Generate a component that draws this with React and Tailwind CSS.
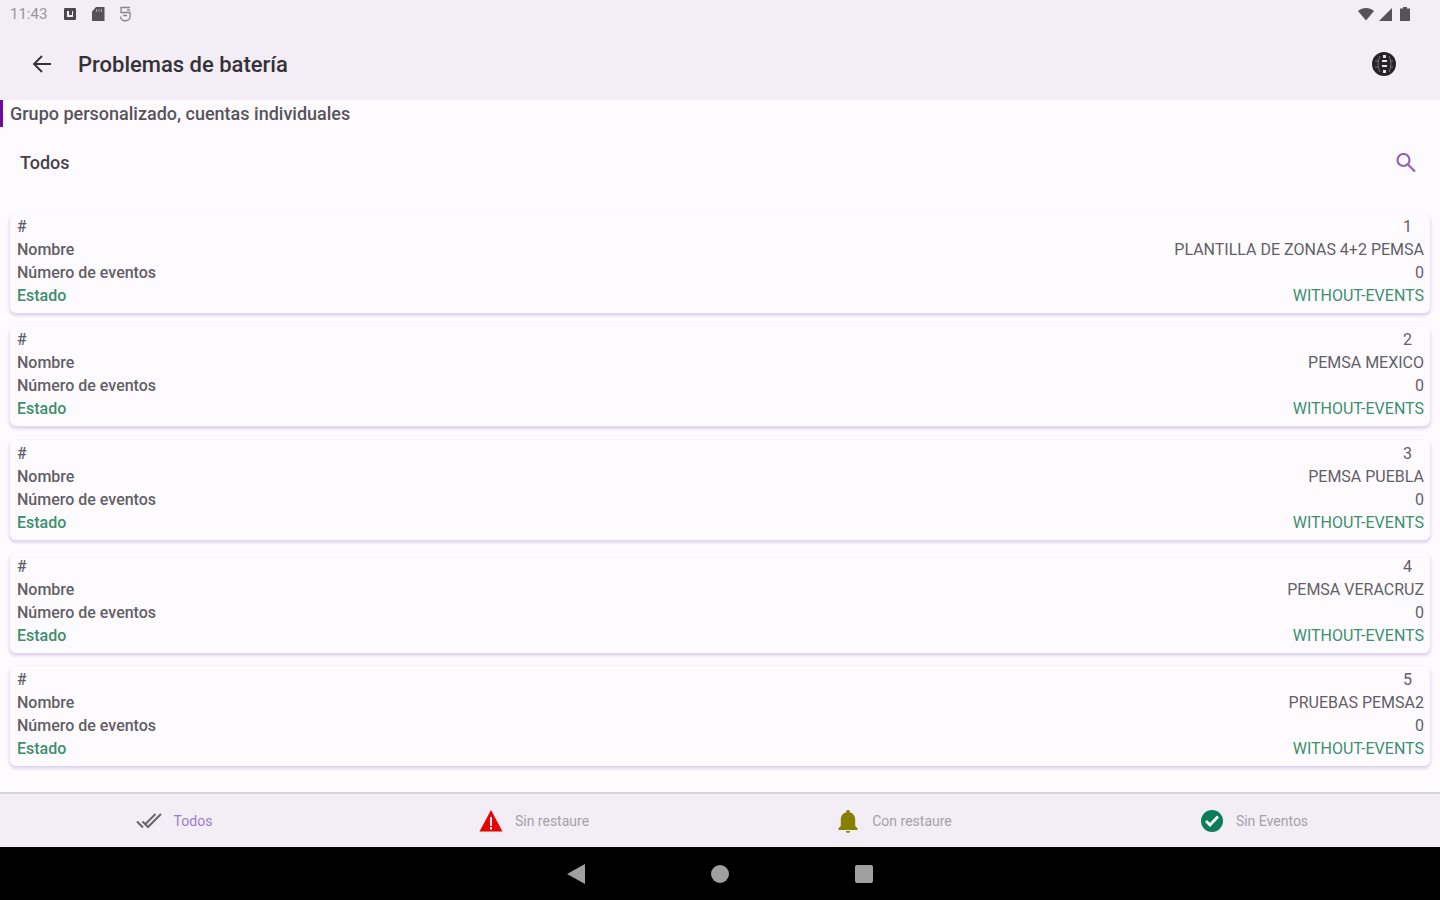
import React, { useState } from "react";

const accounts = [
  { id: 1, name: "PLANTILLA DE ZONAS 4+2 PEMSA", events: 0, status: "WITHOUT-EVENTS" },
  { id: 2, name: "PEMSA MEXICO", events: 0, status: "WITHOUT-EVENTS" },
  { id: 3, name: "PEMSA PUEBLA", events: 0, status: "WITHOUT-EVENTS" },
  { id: 4, name: "PEMSA VERACRUZ", events: 0, status: "WITHOUT-EVENTS" },
  { id: 5, name: "PRUEBAS PEMSA2", events: 0, status: "WITHOUT-EVENTS" },
];

const tabs = [
  { id: "all", label: "Todos", icon: DoubleCheckIcon },
  { id: "open", label: "Sin restaure", icon: WarningIcon },
  { id: "restored", label: "Con restaure", icon: BellIcon },
  { id: "none", label: "Sin Eventos", icon: CheckCircleIcon },
];

function DoubleCheckIcon() {
  return (
    <svg className="w-[26px] h-[18px]" viewBox="0 0 26 18" fill="none" stroke="#68646b" strokeWidth="2">
      <path d="M1 9.5l6 6M6.5 9.5l5.5 5.500L25 2M9 12.500L19.500 2" />
    </svg>
  );
}

function WarningIcon() {
  return (
    <svg className="w-6 h-6" viewBox="0 0 24 24">
      <path d="M12 1L23.500 22.500H0.500z" fill="#e60505" />
      <path d="M11 8h2v9h-2zM11 18h2v2.500h-2z" fill="#f8eef2" />
    </svg>
  );
}

function BellIcon() {
  return (
    <svg className="w-6 h-6" viewBox="0 0 24 24" fill="#858000">
      <path d="M12 1c-1 0-1.800.7-1.800 1.700v.6C6.800 4.200 4.800 7 4.800 10.500V17L2.500 19.300V21h19v-1.700L19.200 17v-6.500c0-3.500-2-6.300-5.400-7.200v-.6C13.800 1.700 13 1 12 1z" />
      <path d="M10 22h4a2 2 0 0 1-4 0z" />
    </svg>
  );
}

function CheckCircleIcon() {
  return (
    <svg className="w-6 h-6" viewBox="0 0 24 24">
      <circle cx="12" cy="12" r="11" fill="#0b7d57" />
      <path d="M6 12l4 4 8-8.500" fill="none" stroke="#fff" strokeWidth="2.800" />
    </svg>
  );
}

function StatusBar() {
  return (
    <div className="h-7 pl-[10px] pr-[30px] flex items-center justify-between">
      <div className="flex items-center">
        <span className="w-[54px] text-[15px] leading-5 text-[#99959c]">11:43</span>
        <svg className="w-3 h-3" viewBox="0 0 12 12">
          <rect width="12" height="12" rx="1" fill="#4c484f" />
          <path d="M3 3h6v6H3z" fill="#f3edf6" />
          <path d="M5 3h3v4H5z" fill="#4c484f" />
        </svg>
        <svg className="w-[14px] h-4 ml-[15px]" viewBox="0 0 14 16">
          <path d="M5 1h8.500v14H1V5.500z" fill="#56525a" />
          <path d="M5.500 3v3M8 3v3M10.500 3v3" stroke="#aaa5ad" />
        </svg>
        <svg className="w-3 h-4 ml-[14px]" viewBox="0 0 12 16" fill="none" stroke="#8a868d" strokeWidth="1.300">
          <path d="M11 1.500H2v5h9V11c0 2-2 3.500-5 4-2.500-.5-4.500-2-4.500-4.500M4 9.500h4M8 4h3" />
        </svg>
      </div>
      <div className="flex items-center gap-1">
        <svg className="w-4 h-[14px]" viewBox="0 0 16 14">
          <path d="M8 13.500L0 4c4.500-4 11.500-4 16 0z" fill="#56525a" />
        </svg>
        <svg className="w-[14px] h-[14px]" viewBox="0 0 14 14">
          <path d="M14 1v13H1z" fill="#56525a" />
        </svg>
        <svg className="w-[10px] h-[14px] ml-1" viewBox="0 0 10 14">
          <path d="M3 0h4v1.500h3V14H0V1.500h3z" fill="#56525a" />
        </svg>
      </div>
    </div>
  );
}

function AccountCard({ account }) {
  return (
    <dl className="rounded-md bg-[#fefbff] pl-[7px] pr-[6px] pt-[2px] pb-[6px] text-[16px] leading-[23px] text-[#625f65] shadow-[0_2px_3px_1px_#e0d6ec]">
      <div className="flex justify-between">
        <dt className="font-medium">#</dt>
        <dd className="pr-3">{account.id}</dd>
      </div>
      <div className="flex justify-between">
        <dt className="font-medium">Nombre</dt>
        <dd>{account.name}</dd>
      </div>
      <div className="flex justify-between">
        <dt className="font-medium">Número de eventos</dt>
        <dd>{account.events}</dd>
      </div>
      <div className="flex justify-between text-[#3d8f6f]">
        <dt className="font-medium">Estado</dt>
        <dd>{account.status}</dd>
      </div>
    </dl>
  );
}

export default function App() {
  const [tab, setTab] = useState("all");

  return (
    <div className="min-h-screen flex flex-col bg-[#fefbff] font-['Roboto',sans-serif]">
      <header className="bg-[#f3edf6]">
        <StatusBar />
        <div className="h-[72px] pl-8 pr-11 flex items-center">
          <button aria-label="Volver" className="w-5 h-5">
            <svg viewBox="0 0 20 20" fill="none" stroke="#333036" strokeWidth="1.800">
              <path d="M19 10H2.500M10 2l-8 8 8 8" />
            </svg>
          </button>
          <h1 className="ml-[26px] pt-[2px] flex-1 text-[22px] leading-7 font-medium text-[#343137]">
            Problemas de batería
          </h1>
          <button aria-label="Idioma" className="w-6 h-6">
            <svg viewBox="0 0 24 24">
              <circle cx="12" cy="12" r="12" fill="#252228" />
              <path d="M11 3h3v3h-3zM10 8h5v2h-5zM10 13h5v2h-5zM11 18h3v3h-3z" fill="#e9e3ec" />
              <path d="M8 4C5.500 9 5.500 15 8 20M17 4c2.500 5 2.500 11 0 16M3 9h3M3 15h3M18 9h3M18 15h3" fill="none" stroke="#77727b" />
            </svg>
          </button>
        </div>
      </header>

      <main className="flex-1 flex flex-col">
        <p className="h-[27px] border-l-[3px] border-[#6a0d9c] pl-[7px] text-[18px] leading-7 font-medium text-[#57545a]">
          Grupo personalizado, cuentas individuales
        </p>
        <div className="h-[72px] pl-5 pr-6 flex items-center justify-between">
          <h2 className="text-[18px] leading-6 font-medium text-[#454248]">Todos</h2>
          <button aria-label="Buscar" className="w-5 h-5">
            <svg viewBox="0 0 20 20" fill="none" stroke="#9063b5" strokeWidth="2.200">
              <circle cx="7.500" cy="7" r="6" />
              <path d="M12 11.500l7 7" />
            </svg>
          </button>
        </div>
        <div className="flex-1 flex flex-col justify-between px-[10px] pt-[14px] pb-[26px]">
          {accounts.map((account) => (
            <AccountCard key={account.id} account={account} />
          ))}
        </div>
      </main>

      <nav className="h-[55px] grid grid-cols-4 border-t-2 border-[#d8d3db] bg-[#f3edf6]">
        {tabs.map(({ id, label, icon: Icon }) => (
          <button
            key={id}
            onClick={() => setTab(id)}
            className={`flex items-center justify-center gap-3 pr-3 text-[14px] leading-5 ${
              tab === id ? "text-[#9a7fc4]" : "text-[#a5a1a8]"
            }`}
          >
            <Icon />
            {label}
          </button>
        ))}
      </nav>

      <div className="h-[53px] flex items-center justify-center gap-[126px] bg-black">
        <button aria-label="Atrás" className="w-[18px] h-5">
          <svg viewBox="0 0 18 20">
            <path d="M0 10L18 0v20z" fill="#a0a0a0" />
          </svg>
        </button>
        <button aria-label="Inicio" className="w-[18px] h-[18px] rounded-full bg-[#a0a0a0]" />
        <button aria-label="Recientes" className="w-[18px] h-[18px] rounded-xs bg-[#a0a0a0]" />
      </div>
    </div>
  );
}
